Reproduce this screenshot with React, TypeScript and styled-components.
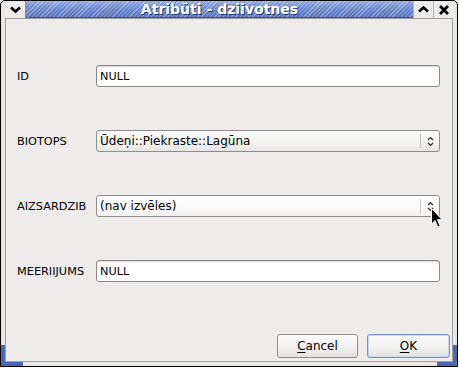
import React from 'react';
import styled, { createGlobalStyle, css } from 'styled-components';

const GlobalStyle = createGlobalStyle`
  html, body {
    margin: 0;
    padding: 0;
    background: #ffffff;
  }
  body {
    font-family: "DejaVu Sans", "Liberation Sans", sans-serif;
    font-size: 12px;
    color: #000;
  }
`;

const Window = styled.div`
  position: relative;
  box-sizing: border-box;
  width: 458px;
  height: 367px;
  border: 1px solid #000;
  border-radius: 5px 5px 0 0;
  background: #e8e7e5;
  padding: 0 4px 4px 4px;
  display: flex;
  flex-direction: column;
`;

const TitleBar = styled.div`
  height: 17px;
  display: flex;
  align-items: stretch;
  flex: none;
`;

const FrameButton = styled.div<{ $sep?: 'left' | 'right' }>`
  box-sizing: border-box;
  width: 20px;
  display: flex;
  align-items: center;
  justify-content: center;
  background: #edeceb;
  ${(p) =>
    p.$sep === 'left' &&
    css`
      border-left: 1px solid #b4b3b1;
    `}
  ${(p) =>
    p.$sep === 'right' &&
    css`
      width: 21px;
      border-right: 1px solid #8f8e8c;
    `}
`;

const Caption = styled.div`
  flex: 1;
  display: flex;
  align-items: center;
  justify-content: center;
  border-bottom: 1px solid #3c569c;
  background:
    repeating-linear-gradient(
      135deg,
      rgba(255, 255, 255, 0.3) 0 1px,
      rgba(255, 255, 255, 0) 1px 3px
    ),
    linear-gradient(#93a9e0, #6d89cd 45%, #5673bd);
  color: #fff;
  font-weight: bold;
  font-size: 14px;
  line-height: 16px;
  text-shadow: 1px 1px 0 #26396b;
  white-space: nowrap;
`;

const Client = styled.div`
  flex: 1;
  box-sizing: border-box;
  border: 1px solid #a09f9d;
  background: #edeceb;
  display: flex;
  flex-direction: column;
  padding: 46px 2px 3px 11px;
`;

const Form = styled.div`
  display: flex;
  flex-direction: column;
  gap: 43px;
  padding-right: 10px;
`;

const Row = styled.div`
  display: flex;
  align-items: center;
  height: 22px;
`;

const Label = styled.div`
  width: 79px;
  flex: none;
  font-size: 11.3px;
  white-space: nowrap;
`;

const LineEdit = styled.div`
  flex: 1;
  box-sizing: border-box;
  height: 22px;
  border: 1px solid #8a8987;
  border-radius: 3px;
  background: #fff;
  box-shadow: inset 0 1px 0 #d8d8d8;
  padding: 0 3px;
  font-size: 11.3px;
  display: flex;
  align-items: center;
`;

const Combo = styled.div<{ $hover?: boolean }>`
  flex: 1;
  box-sizing: border-box;
  height: 22px;
  border: 1px solid #8e8d8b;
  border-radius: 3px;
  background: ${(p) =>
    p.$hover
      ? 'linear-gradient(#ffffff, #fbfbfb 55%, #f0f0f0)'
      : 'linear-gradient(#fbfbfb, #f3f3f2 55%, #e6e6e5)'};
  display: flex;
  align-items: center;
  padding-left: 3px;
`;

const ComboText = styled.div`
  flex: 1;
  white-space: nowrap;
`;

const ComboArrow = styled.div`
  width: 18px;
  height: 14px;
  border-left: 1px solid #c4c3c1;
  display: flex;
  align-items: center;
  justify-content: center;
`;

const ButtonBox = styled.div`
  margin-top: auto;
  display: flex;
  justify-content: flex-end;
  gap: 9px;
`;

const Button = styled.div<{ $default?: boolean }>`
  box-sizing: border-box;
  width: ${(p) => (p.$default ? '83px' : '81px')};
  height: 24px;
  border: 1px solid ${(p) => (p.$default ? '#7892c8' : '#8f8e8c')};
  border-radius: 3px;
  background: linear-gradient(#fbfbfb, #f1f1f0 55%, #e3e2e1);
  box-shadow: ${(p) => (p.$default ? 'inset 0 0 0 1px #c9d6ef' : 'none')};
  display: flex;
  align-items: center;
  justify-content: center;

  u {
    text-decoration: underline;
    text-underline-offset: 2px;
  }
`;

const Grip = styled.div<{ $side: 'left' | 'right' }>`
  position: absolute;
  bottom: -1px;
  ${(p) => (p.$side === 'left' ? 'left: -1px;' : 'right: -1px;')}
  width: ${(p) => (p.$side === 'left' ? '22px' : '20px')};
  height: 21px;
  box-sizing: border-box;
  border-bottom: 4px solid #4a67b5;
  ${(p) =>
    p.$side === 'left'
      ? 'border-left: 4px solid #4a67b5; margin-left: 1px;'
      : 'border-right: 4px solid #4a67b5; margin-right: 1px;'}
  margin-bottom: 1px;
`;

const Pointer = styled.svg`
  position: absolute;
  left: 429px;
  top: 206px;
`;

function ChevronDown() {
  return (
    <svg width="11" height="7" viewBox="0 0 11 7">
      <path d="M1 1.5 L5.5 5.5 L10 1.5" fill="none" stroke="#000" strokeWidth="2.6" />
    </svg>
  );
}

function ChevronUp() {
  return (
    <svg width="11" height="7" viewBox="0 0 11 7">
      <path d="M1 5.5 L5.5 1.5 L10 5.5" fill="none" stroke="#000" strokeWidth="2.6" />
    </svg>
  );
}

function CloseGlyph() {
  return (
    <svg width="10" height="10" viewBox="0 0 10 10">
      <path d="M1 1 L9 9 M9 1 L1 9" fill="none" stroke="#000" strokeWidth="2.8" />
    </svg>
  );
}

function UpDown() {
  return (
    <svg width="7" height="11" viewBox="0 0 7 11">
      <path
        d="M1 4 L3.5 1.5 L6 4 M1 7 L3.5 9.5 L6 7"
        fill="none"
        stroke="#2b2b2b"
        strokeWidth="1.2"
      />
    </svg>
  );
}

export default function App() {
  return (
    <>
      <GlobalStyle />
      <Window>
        <TitleBar>
          <FrameButton $sep="right">
            <ChevronDown />
          </FrameButton>
          <Caption>Atribūti - dziivotnes</Caption>
          <FrameButton $sep="left">
            <ChevronUp />
          </FrameButton>
          <FrameButton $sep="left">
            <CloseGlyph />
          </FrameButton>
        </TitleBar>
        <Client>
          <Form>
            <Row>
              <Label>ID</Label>
              <LineEdit>NULL</LineEdit>
            </Row>
            <Row>
              <Label>BIOTOPS</Label>
              <Combo>
                <ComboText>Ūdeņi::Piekraste::Lagūna</ComboText>
                <ComboArrow>
                  <UpDown />
                </ComboArrow>
              </Combo>
            </Row>
            <Row>
              <Label>AIZSARDZIB</Label>
              <Combo $hover>
                <ComboText>(nav izvēles)</ComboText>
                <ComboArrow>
                  <UpDown />
                </ComboArrow>
              </Combo>
            </Row>
            <Row>
              <Label>MEERIIJUMS</Label>
              <LineEdit>NULL</LineEdit>
            </Row>
          </Form>
          <ButtonBox>
            <Button>
              <span>
                <u>C</u>ancel
              </span>
            </Button>
            <Button $default>
              <span>
                <u>O</u>K
              </span>
            </Button>
          </ButtonBox>
        </Client>
        <Grip $side="left" />
        <Grip $side="right" />
        <Pointer width="14" height="22" viewBox="0 0 14 22">
          <path
            d="M1.5 1.5 L1.5 17 L5 13.5 L7.8 20 L10.2 19 L7.5 12.7 L12.2 12.7 Z"
            fill="#000"
            stroke="#fff"
            strokeWidth="1"
            strokeLinejoin="round"
          />
        </Pointer>
      </Window>
    </>
  );
}
